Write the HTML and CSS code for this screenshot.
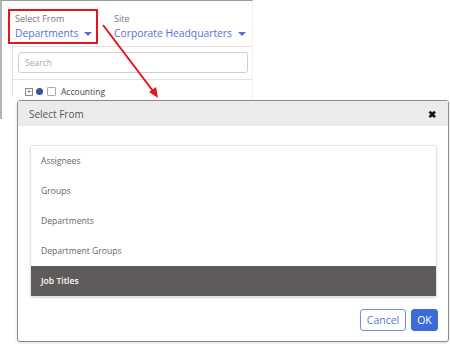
FILE: index.html
```html
<html>
<head>
    <title>Select From</title>
    <meta name="viewport" content="width=device-width, initial-scale=1.0">
    <link rel="stylesheet" href="styles.css">
</head>
<body>
    <div class="stage">
        <div class="app">
            <div class="app-header">
                <div class="field highlight">
                    <div class="field-label">Select From</div>
                    <div class="field-value">Departments <span class="caret"></span></div>
                </div>
                <div class="field">
                    <div class="field-label">Site</div>
                    <div class="field-value">Corporate Headquarters <span class="caret"></span></div>
                </div>
            </div>
            <div class="tree-panel">
                <div class="search-row">
                    <div class="search-box">Search</div>
                </div>
                <div class="tree-row">
                    <span class="expander">+</span>
                    <span class="dot"></span>
                    <span class="check"></span>
                    <span class="tree-label">Accounting</span>
                </div>
            </div>
        </div>

        <svg class="pointer" width="450" height="344" viewBox="0 0 450 344">
            <line x1="103" y1="25" x2="153" y2="91" stroke="#e8141b" stroke-width="2"/>
            <polygon points="158,98 149,92 156,87" fill="#e8141b"/>
        </svg>

        <div class="dialog">
            <div class="dialog-header">
                <span>Select From</span>
                <span class="close">&#10006;</span>
            </div>
            <div class="dialog-body">
                <div class="option-list">
                    <div class="option">Assignees</div>
                    <div class="option">Groups</div>
                    <div class="option">Departments</div>
                    <div class="option">Department Groups</div>
                    <div class="option selected">Job Titles</div>
                </div>
            </div>
            <div class="dialog-footer">
                <button class="btn btn-cancel">Cancel</button>
                <button class="btn btn-ok">OK</button>
            </div>
        </div>
    </div>
</body>
</html>
```

FILE: styles.css
```css
body {
    margin: 0;
    padding: 0;
    background: white;
    font-family: "Open Sans", Arial, sans-serif;
    color: #555;
}
.stage {
    position: relative;
    width: 450px;
    height: 344px;
    overflow: hidden;
}
.app {
    width: 250px;
    height: 118px;
    border-top: 1px solid #9a9a9a;
    border-left: 2px solid #b5b5b5;
    border-right: 1px solid #f0f0f0;
}
.app-header {
    display: flex;
    padding: 8px 0 0 6px;
    height: 37px;
}
.field {
    border: 2px solid transparent;
    padding: 2px 5px 0;
    height: 29px;
}
.field.highlight {
    border-color: #e8141b;
    width: 76px;
    margin-right: 9px;
}
.field-label {
    font-size: 9px;
    line-height: 12px;
    color: #777;
}
.field-value {
    font-size: 10.3px;
    line-height: 17px;
    color: #5a6fd6;
    white-space: nowrap;
}
.caret {
    display: inline-block;
    width: 0;
    height: 0;
    border-left: 4px solid transparent;
    border-right: 4px solid transparent;
    border-top: 4px solid #5a6fd6;
    margin-left: 3px;
    vertical-align: middle;
}
.tree-panel {
    margin-left: 10px;
    border-left: 1px solid #e2e2e2;
    border-top: 1px solid #e2e2e2;
}
.search-row {
    padding: 5px 4px 6px 5px;
    border-bottom: 1px solid #e2e2e2;
}
.search-box {
    height: 19px;
    border: 1px solid #cfcfcf;
    border-radius: 3px;
    font-size: 8.5px;
    line-height: 19px;
    color: #aaa;
    padding-left: 6px;
}
.tree-row {
    display: flex;
    align-items: center;
    gap: 3px;
    padding: 6px 0 0 12px;
}
.expander {
    width: 6px;
    height: 6px;
    border: 1px solid #888;
    font-size: 7px;
    line-height: 6px;
    text-align: center;
    color: #333;
}
.dot {
    width: 7px;
    height: 7px;
    border-radius: 50%;
    background: #3d4f9a;
}
.check {
    width: 7px;
    height: 7px;
    border: 1px solid #aaa;
    border-radius: 1px;
    margin-left: 1px;
}
.tree-label {
    font-size: 8.5px;
    color: #444;
    margin-left: 2px;
}
.pointer {
    position: absolute;
    left: 0;
    top: 0;
}
.dialog {
    position: absolute;
    left: 17px;
    top: 100px;
    width: 430px;
    height: 240px;
    border: 1px solid #8c8c8c;
    border-radius: 3px;
    background: white;
    box-shadow: 0 1px 3px rgba(0, 0, 0, 0.15);
}
.dialog-header {
    display: flex;
    justify-content: space-between;
    align-items: center;
    height: 25px;
    background: #ebebeb;
    padding: 0 12px 0 11px;
    font-size: 10px;
    color: #555;
}
.close {
    font-size: 10px;
    color: #111;
    font-weight: bold;
}
.dialog-body {
    padding: 19px 11px 0 12px;
}
.option-list {
    border: 1px solid #e4e4e4;
    border-radius: 2px;
    box-shadow: 0 1px 2px rgba(0, 0, 0, 0.15);
}
.option {
    height: 30px;
    line-height: 30px;
    padding-left: 10px;
    font-size: 8.6px;
    color: #666;
}
.option.selected {
    background: #5f5b5a;
    color: white;
    font-weight: 600;
}
.dialog-footer {
    display: flex;
    justify-content: flex-end;
    gap: 5px;
    padding: 12px 10px 0 0;
}
.btn {
    height: 22px;
    border-radius: 3px;
    font-family: "Open Sans", Arial, sans-serif;
    font-size: 10.5px;
    padding: 0;
    cursor: pointer;
}
.btn-cancel {
    width: 46px;
    border: 1px solid #6d8fe0;
    background: white;
    color: #5577cc;
}
.btn-ok {
    width: 27px;
    border: 1px solid #3d6cd9;
    background: #3d6cd9;
    color: white;
}
```
